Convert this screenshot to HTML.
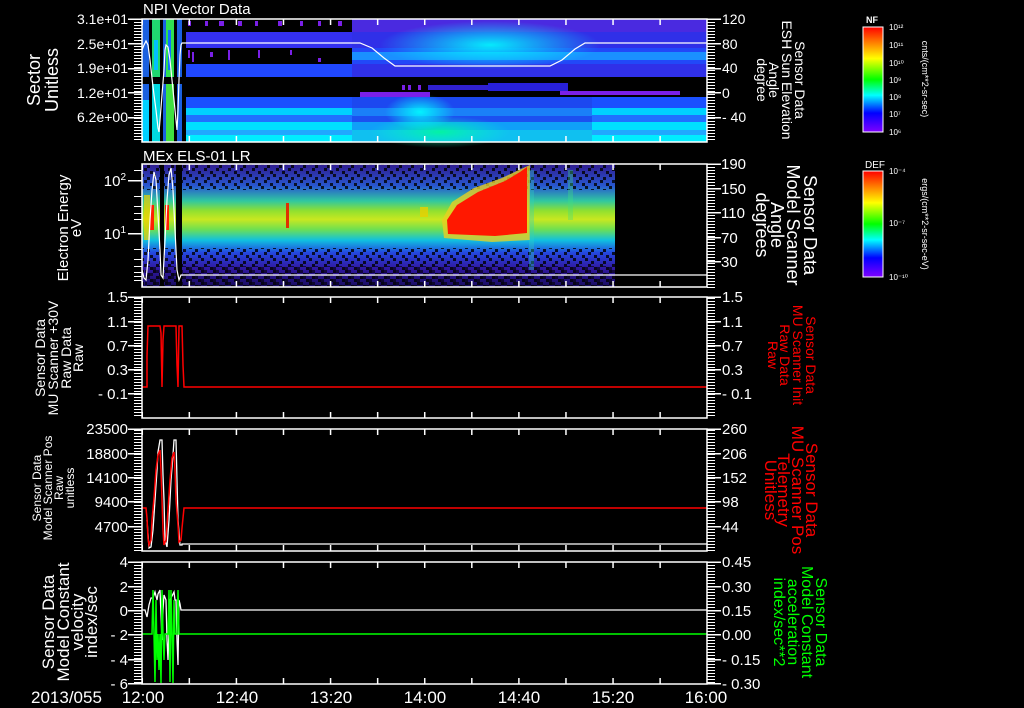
<!DOCTYPE html>
<html><head><meta charset="utf-8"><style>
html,body{margin:0;padding:0;background:#000;}
svg{display:block}
text{font-family:"Liberation Sans",sans-serif;fill:#fff;}
.red text{fill:#f00;}
.grn text{fill:#0f0;}
</style></head><body>
<svg width="1024" height="708" viewBox="0 0 1024 708" xmlns="http://www.w3.org/2000/svg">
<defs>
<pattern id="mt" width="8" height="3" patternUnits="userSpaceOnUse" y="19"><rect width="8" height="1" fill="#fff"/></pattern>
<pattern id="mtx" width="47.08" height="8" patternUnits="userSpaceOnUse" x="141.5"><rect width="1.5" height="8" fill="#fff"/></pattern>
<pattern id="spk" width="12" height="12" patternUnits="userSpaceOnUse"><rect x="0" y="0" width="3" height="3" fill="#000"/><rect x="6" y="3" width="3" height="3" fill="#000"/><rect x="3" y="9" width="3" height="3" fill="#000"/><rect x="9" y="6" width="3" height="3" fill="#000"/></pattern>
<linearGradient id="cb" x1="0" y1="0" x2="0" y2="1">
<stop offset="0" stop-color="#ff0000"/><stop offset=".15" stop-color="#ff8000"/><stop offset=".3" stop-color="#ffff00"/><stop offset=".5" stop-color="#00ff00"/><stop offset=".65" stop-color="#00ffff"/><stop offset=".82" stop-color="#0000ff"/><stop offset="1" stop-color="#8000ff"/></linearGradient>
<linearGradient id="p2" x1="0" y1="0" x2="0" y2="1">
<stop offset="0" stop-color="#301a90"/><stop offset=".18" stop-color="#2858d0"/><stop offset=".3" stop-color="#30c8a0"/><stop offset=".38" stop-color="#90e030"/><stop offset=".45" stop-color="#c8e820"/><stop offset=".53" stop-color="#70e050"/><stop offset=".62" stop-color="#10c0e0"/><stop offset=".72" stop-color="#2448e0"/><stop offset=".85" stop-color="#3018a0"/><stop offset="1" stop-color="#180c60"/></linearGradient>
<radialGradient id="cy" cx=".5" cy=".5" r=".5"><stop offset="0" stop-color="#00ffff" stop-opacity=".9"/><stop offset="1" stop-color="#00ffff" stop-opacity="0"/></radialGradient>
<radialGradient id="gr" cx=".5" cy=".5" r=".5"><stop offset="0" stop-color="#00ff90" stop-opacity=".8"/><stop offset="1" stop-color="#00ffd0" stop-opacity="0"/></radialGradient>
</defs>

<!-- ===== Panel 1 ===== -->
<text x="143" y="14" font-size="15">NPI Vector Data</text>
<g>
<rect x="186" y="32" width="521" height="16" fill="#3430f0"/>
<rect x="186" y="64" width="521" height="13" fill="#2048ff"/>
<rect x="186" y="97" width="521" height="11" fill="#1a50ff"/>
<rect x="186" y="108" width="521" height="7" fill="#00d0ff"/>
<rect x="186" y="115" width="521" height="7" fill="#2070ff"/>
<rect x="186" y="122" width="521" height="8" fill="#00e0ff"/>
<rect x="186" y="130" width="521" height="5" fill="#20a8ff"/>
<rect x="186" y="135" width="521" height="7" fill="#00ecff"/>
<!-- right part -->
<rect x="352" y="19" width="355" height="58" fill="#3030e8"/>
<rect x="352" y="19" width="355" height="13" fill="#4a2ae0"/>
<rect x="352" y="48" width="355" height="16" fill="#2248f8"/>
<rect x="352" y="52" width="355" height="8" fill="#1a90ff"/>
<ellipse cx="490" cy="45" rx="110" ry="24" fill="url(#cy)"/>
<rect x="352" y="97" width="240" height="11" fill="#1c48f0"/>
<rect x="352" y="108" width="240" height="8" fill="#1a80f8"/>
<rect x="352" y="116" width="240" height="6" fill="#1c50f0"/>
<rect x="352" y="122" width="240" height="8" fill="#10a0f8"/>
<rect x="352" y="130" width="240" height="12" fill="#10c0f0"/>
<ellipse cx="440" cy="132" rx="70" ry="16" fill="url(#gr)"/>
<ellipse cx="420" cy="112" rx="35" ry="18" fill="url(#cy)"/>
<!-- sparse purple -->
<g fill="#7a20e8">
<rect x="188" y="21" width="3" height="5"/><rect x="205" y="21" width="3" height="5"/><rect x="219" y="21" width="5" height="5"/><rect x="238" y="21" width="4" height="5"/><rect x="255" y="21" width="3" height="5"/><rect x="278" y="21" width="4" height="5"/><rect x="300" y="21" width="3" height="5"/><rect x="318" y="21" width="3" height="5"/><rect x="338" y="21" width="4" height="5"/>
<rect x="188" y="50" width="2" height="8"/><rect x="192" y="52" width="2" height="10"/><rect x="210" y="52" width="3" height="5"/><rect x="228" y="50" width="2" height="10"/><rect x="258" y="50" width="2" height="8"/><rect x="290" y="50" width="2" height="5"/><rect x="318" y="58" width="3" height="4"/>
<rect x="402" y="85" width="3" height="5"/><rect x="408" y="85" width="3" height="5"/><rect x="418" y="85" width="3" height="5"/><rect x="428" y="85" width="60" height="5" fill="#3020d0"/><rect x="488" y="83" width="80" height="8" fill="#2820d8"/><rect x="560" y="91" width="120" height="4"/><rect x="360" y="92" width="70" height="5"/>
</g>
<!-- early region -->
<rect x="142" y="19" width="40" height="123" fill="#1a60e0"/>
<rect x="149" y="19" width="3" height="123" fill="#000"/>
<rect x="152" y="19" width="8" height="58" fill="#20d870"/>
<rect x="154" y="40" width="4" height="30" fill="#00c0ff"/>
<rect x="160" y="19" width="3" height="123" fill="#000"/>
<rect x="166" y="19" width="8" height="58" fill="#30e050"/>
<rect x="168" y="30" width="3" height="40" fill="#1070ff"/>
<rect x="174" y="19" width="3" height="123" fill="#000"/>
<rect x="152" y="84" width="8" height="58" fill="#00d8e0"/>
<rect x="166" y="84" width="8" height="58" fill="#40e040"/>
<rect x="142" y="100" width="7" height="42" fill="#00d0ff"/>
<rect x="182" y="19" width="4" height="123" fill="#000"/>
<rect x="142" y="77" width="44" height="7" fill="#000"/>
<polyline fill="none" stroke="#fff" stroke-width="1.2" points="142,50 144,45 146,41 148,45 150,60 152,78 154,95 156,110 158,128 159,132 160,120 162,95 164,70 165,50 166,45 168,47 170,60 172,80 174,100 176,120 177,130 178,110 179,80 180,55 181,45 182,43 186,43 360,43 372,48 384,58 395,66 550,66 562,60 575,49 585,43 707,43"/>
</g>
<rect x="142" y="19" width="565" height="123" fill="none" stroke="#fff" stroke-width="1.5"/>
<rect x="142" y="19" width="565" height="6" fill="url(#mtx)"/>
<rect x="142" y="136" width="565" height="6" fill="url(#mtx)"/>
<rect x="134" y="19" width="8" height="123" fill="url(#mt)"/>
<rect x="707" y="19" width="8" height="123" fill="url(#mt)"/>
<g fill="#fff"><rect x="128" y="18.5" width="14" height="1.5"/><rect x="128" y="43" width="14" height="1.5"/><rect x="128" y="68" width="14" height="1.5"/><rect x="128" y="92" width="14" height="1.5"/><rect x="128" y="117" width="14" height="1.5"/>
<rect x="707" y="18.5" width="14" height="1.5"/><rect x="707" y="43" width="14" height="1.5"/><rect x="707" y="68" width="14" height="1.5"/><rect x="707" y="92" width="14" height="1.5"/><rect x="707" y="117" width="14" height="1.5"/></g>
<g font-size="14" text-anchor="end"><text x="128" y="24">3.1e+01</text><text x="128" y="49">2.5e+01</text><text x="128" y="73">1.9e+01</text><text x="128" y="98">1.2e+01</text><text x="128" y="122">6.2e+00</text></g>
<g font-size="14"><text x="722" y="24">120</text><text x="722" y="49">80</text><text x="722" y="73">40</text><text x="722" y="98">0</text><text x="722" y="122">- 40</text></g>
<g transform="translate(40,80) rotate(-90)" font-size="18" text-anchor="middle"><text y="0">Sector</text><text y="18">Unitless</text></g>
<g transform="translate(795,80) rotate(90)" font-size="14" text-anchor="middle"><text y="0">Sensor Data</text><text y="13">ESH Sun Elevation</text><text y="26">Angle</text><text y="38">degree</text></g>
<rect x="863" y="27" width="20" height="105" fill="url(#cb)" stroke="#fff" stroke-width="1"/>
<text x="866" y="23" font-size="9" font-weight="bold">NF</text>
<g font-size="8"><text x="889" y="30">10¹²</text><text x="889" y="48">10¹¹</text><text x="889" y="66">10¹⁰</text><text x="889" y="83">10⁹</text><text x="889" y="100">10⁸</text><text x="889" y="117">10⁷</text><text x="889" y="135">10⁶</text></g>
<text transform="translate(922,79) rotate(90)" font-size="9" text-anchor="middle">cnts/(cm**2-sr-sec)</text>

<!-- ===== Panel 2 ===== -->
<text x="143" y="161" font-size="15">MEx ELS-01 LR</text>
<rect x="142" y="164" width="473" height="123" fill="url(#p2)"/>
<rect x="142" y="164" width="473" height="26" fill="url(#spk)" opacity=".8"/>
<rect x="142" y="248" width="473" height="39" fill="url(#spk)" opacity=".8"/>
<rect x="142" y="266" width="473" height="21" fill="url(#spk)" opacity=".6" transform="translate(3,0)"/>
<polygon points="444,238 442,220 452,202 474,188 502,178 521,169 530,165 530,240 492,242" fill="#e8d020" opacity=".8"/>
<polygon points="448,234 447,220 457,205 478,192 505,181 520,172 527,167 527,233 495,236" fill="#ff1800"/>
<rect x="286" y="203" width="3" height="25" fill="#e03000"/>
<rect x="420" y="207" width="8" height="10" fill="#e8d000" opacity=".8"/>
<rect x="529" y="170" width="5" height="100" fill="#30d0c0" opacity=".35"/>
<rect x="568" y="170" width="5" height="50" fill="#40e080" opacity=".35"/>
<rect x="144" y="195" width="6" height="45" fill="#f0d000" opacity=".7"/>
<rect x="150" y="205" width="4" height="25" fill="#ff2000"/>
<rect x="165" y="205" width="4" height="25" fill="#ff2000"/>
<rect x="160" y="164" width="4" height="123" fill="#000"/>
<rect x="176" y="164" width="6" height="123" fill="#000"/>
<polyline fill="none" stroke="#fff" stroke-width="1.2" points="142,270 144,278 146,280 148,260 150,220 152,190 154,172 156,180 158,215 160,250 161,275 163,278 165,240 167,200 169,175 171,168 173,190 175,230 177,270 179,280 181,275 707,275"/>
<rect x="142" y="164" width="565" height="123" fill="none" stroke="#fff" stroke-width="1.5"/>
<rect x="142" y="164" width="565" height="6" fill="url(#mtx)"/>
<rect x="142" y="281" width="565" height="6" fill="url(#mtx)"/>
<rect x="707" y="164" width="8" height="123" fill="url(#mt)" transform="translate(0,1)"/>
<g fill="#fff"><rect x="707" y="163.5" width="14" height="1.5"/><rect x="707" y="188" width="14" height="1.5"/><rect x="707" y="212" width="14" height="1.5"/><rect x="707" y="237" width="14" height="1.5"/><rect x="707" y="261" width="14" height="1.5"/>
<rect x="128" y="180" width="14" height="1.5"/><rect x="128" y="233" width="14" height="1.5"/><rect x="134" y="196" width="8" height="1"/><rect x="134" y="206" width="8" height="1"/><rect x="134" y="213" width="8" height="1"/><rect x="134" y="219" width="8" height="1"/><rect x="134" y="249" width="8" height="1"/><rect x="134" y="259" width="8" height="1"/><rect x="134" y="266" width="8" height="1"/><rect x="134" y="272" width="8" height="1"/><rect x="134" y="276" width="8" height="1"/><rect x="134" y="280" width="8" height="1"/><rect x="134" y="170" width="8" height="1"/></g>
<g font-size="15" text-anchor="end"><text x="126" y="186">10<tspan font-size="10" dy="-6">2</tspan></text><text x="126" y="239">10<tspan font-size="10" dy="-6">1</tspan></text></g>
<g font-size="15"><text x="721" y="169">190</text><text x="721" y="194">150</text><text x="721" y="218">110</text><text x="721" y="243">70</text><text x="721" y="267">30</text></g>
<g transform="translate(68,228) rotate(-90)" font-size="15" text-anchor="middle"><text y="0">Electron Energy</text><text y="13">eV</text></g>
<g transform="translate(804,225) rotate(90)" font-size="18" text-anchor="middle"><text y="0">Sensor Data</text><text y="17">Model Scanner</text><text y="33">Angle</text><text y="48">degrees</text></g>
<rect x="863" y="171" width="20" height="106" fill="url(#cb)" stroke="#fff" stroke-width="1"/>
<text x="865" y="168" font-size="10">DEF</text>
<g font-size="8"><text x="889" y="174">10⁻⁴</text><text x="889" y="226">10⁻⁷</text><text x="889" y="280">10⁻¹⁰</text></g>
<text transform="translate(922,224) rotate(90)" font-size="9" text-anchor="middle">ergs/(cm**2-sr-sec-eV)</text>

<!-- ===== Panel 3 ===== -->
<polyline fill="none" stroke="#f00" stroke-width="1.5" points="142,387 147,387 147,356 148,326 160,326 161,333 162,387 163,340 164,326 176,326 177,365 178,387 179,326 182,326 183,365 184,387 707,387"/>
<rect x="142" y="297" width="565" height="121" fill="none" stroke="#fff" stroke-width="1.5"/>
<rect x="142" y="297" width="565" height="6" fill="url(#mtx)"/>
<rect x="142" y="412" width="565" height="6" fill="url(#mtx)"/>
<rect x="134" y="297" width="8" height="121" fill="url(#mt)"/>
<rect x="707" y="297" width="8" height="121" fill="url(#mt)"/>
<g fill="#fff"><rect x="128" y="296.5" width="14" height="1.5"/><rect x="128" y="321" width="14" height="1.5"/><rect x="128" y="345" width="14" height="1.5"/><rect x="128" y="369" width="14" height="1.5"/><rect x="128" y="393" width="14" height="1.5"/>
<rect x="707" y="296.5" width="14" height="1.5"/><rect x="707" y="321" width="14" height="1.5"/><rect x="707" y="345" width="14" height="1.5"/><rect x="707" y="369" width="14" height="1.5"/><rect x="707" y="393" width="14" height="1.5"/></g>
<g font-size="15" text-anchor="end"><text x="128" y="302">1.5</text><text x="128" y="327">1.1</text><text x="128" y="351">0.7</text><text x="128" y="375">0.3</text><text x="128" y="399">- 0.1</text></g>
<g font-size="15"><text x="722" y="302">1.5</text><text x="722" y="327">1.1</text><text x="722" y="351">0.7</text><text x="722" y="375">0.3</text><text x="722" y="399">- 0.1</text></g>
<g transform="translate(45,358) rotate(-90)" font-size="14" text-anchor="middle"><text y="0">Sensor Data</text><text y="13">MU Scanner +30V</text><text y="26">Raw Data</text><text y="38">Raw</text></g>
<g class="red" transform="translate(806,355) rotate(90)" font-size="14" text-anchor="middle"><text y="0">Sensor Data</text><text y="13">MU Scanner Init</text><text y="26">Raw Data</text><text y="38">Raw</text></g>

<!-- ===== Panel 4 ===== -->
<polyline fill="none" stroke="#fff" stroke-width="1.3" points="147,520 149,548 151,547 153,530 155,500 157,470 158,452 160,440 162,440 163,475 164,500 165,540 167,547 169,520 171,480 173,455 174,440 176,440 177,480 178,520 180,545 182,545 182,544 707,544"/>
<polyline fill="none" stroke="#f00" stroke-width="1.5" points="142,508 146,508 147,518 148,538 149,545 151,540 152,520 154,498 156,470 158,455 160,450 161,470 162,500 163,530 164,545 166,540 168,510 170,480 172,458 174,452 175,470 176,500 178,525 179,542 181,540 182,528 184,508 707,508"/>
<rect x="142" y="429" width="565" height="122" fill="none" stroke="#fff" stroke-width="1.5"/>
<rect x="142" y="429" width="565" height="6" fill="url(#mtx)"/>
<rect x="142" y="545" width="565" height="6" fill="url(#mtx)"/>
<rect x="134" y="430" width="8" height="121" fill="url(#mt)"/>
<rect x="707" y="430" width="8" height="121" fill="url(#mt)"/>
<g fill="#fff"><rect x="128" y="428.5" width="14" height="1.5"/><rect x="128" y="453" width="14" height="1.5"/><rect x="128" y="477" width="14" height="1.5"/><rect x="128" y="501" width="14" height="1.5"/><rect x="128" y="526" width="14" height="1.5"/>
<rect x="707" y="428.5" width="14" height="1.5"/><rect x="707" y="453" width="14" height="1.5"/><rect x="707" y="477" width="14" height="1.5"/><rect x="707" y="501" width="14" height="1.5"/><rect x="707" y="526" width="14" height="1.5"/></g>
<g font-size="15" text-anchor="end"><text x="128" y="434">23500</text><text x="128" y="459">18800</text><text x="128" y="483">14100</text><text x="128" y="507">9400</text><text x="128" y="532">4700</text></g>
<g font-size="15"><text x="722" y="434">260</text><text x="722" y="459">206</text><text x="722" y="483">152</text><text x="722" y="507">98</text><text x="722" y="532">44</text></g>
<g transform="translate(41,488) rotate(-90)" font-size="12" text-anchor="middle"><text y="0">Sensor Data</text><text y="11">Model Scanner Pos</text><text y="22">Raw</text><text y="33">unitless</text></g>
<g class="red" transform="translate(806,490) rotate(90)" font-size="17" text-anchor="middle"><text y="0">Sensor Data</text><text y="14">MU Scanner Pos</text><text y="28">Telemetry</text><text y="41">Unitless</text></g>

<!-- ===== Panel 5 ===== -->
<polyline fill="none" stroke="#fff" stroke-width="1.3" points="142,610 145,610 147,617 149,605 151,598 153,598 155,592 157,600 158,594 160,590 162,640 163,610 164,595 166,600 167,640 168,660 170,600 172,596 174,592 175,600 176,600 177,640 178,665 179,600 180,604 181,610 707,610"/>
<polyline fill="none" stroke="#0f0" stroke-width="1.5" points="142,634 152,634 153,590 154,634 155,682 156,600 157,660 158,634 159,670 160,634 161,683 162,590 163,634 164,660 165,634 168,634 169,590 170,682 171,590 172,634 173,683 174,600 175,634 177,634 178,590 179,634 707,634"/>
<rect x="142" y="562" width="565" height="122" fill="none" stroke="#fff" stroke-width="1.5"/>
<rect x="142" y="562" width="565" height="6" fill="url(#mtx)"/>
<rect x="142" y="678" width="565" height="6" fill="url(#mtx)"/>
<rect x="134" y="562" width="8" height="122" fill="url(#mt)"/>
<rect x="707" y="562" width="8" height="122" fill="url(#mt)"/>
<g fill="#fff"><rect x="128" y="561.5" width="14" height="1.5"/><rect x="128" y="586" width="14" height="1.5"/><rect x="128" y="610" width="14" height="1.5"/><rect x="128" y="634" width="14" height="1.5"/><rect x="128" y="659" width="14" height="1.5"/><rect x="128" y="683" width="14" height="1.5"/>
<rect x="707" y="561.5" width="14" height="1.5"/><rect x="707" y="586" width="14" height="1.5"/><rect x="707" y="610" width="14" height="1.5"/><rect x="707" y="634" width="14" height="1.5"/><rect x="707" y="659" width="14" height="1.5"/><rect x="707" y="683" width="14" height="1.5"/></g>
<g font-size="15" text-anchor="end"><text x="128" y="567">4</text><text x="128" y="592">2</text><text x="128" y="616">0</text><text x="128" y="640">- 2</text><text x="128" y="665">- 4</text><text x="128" y="689">- 6</text></g>
<g font-size="15"><text x="722" y="567">0.45</text><text x="722" y="592">0.30</text><text x="722" y="616">0.15</text><text x="722" y="640">0.00</text><text x="722" y="665">- 0.15</text><text x="722" y="689">- 0.30</text></g>
<g transform="translate(54,622) rotate(-90)" font-size="17" text-anchor="middle"><text y="0">Sensor Data</text><text y="15">Model Constant</text><text y="29">velocity</text><text y="43">index/sec</text></g>
<g class="grn" transform="translate(816,622) rotate(90)" font-size="16" text-anchor="middle"><text y="0">Sensor Data</text><text y="14">Model Constant</text><text y="28">acceleration</text><text y="42">index/sec**2</text></g>

<g font-size="17"><text x="31" y="703">2013/055</text></g>
<g font-size="17" text-anchor="middle"><text x="143" y="703">12:00</text><text x="237" y="703">12:40</text><text x="331" y="703">13:20</text><text x="425" y="703">14:00</text><text x="519" y="703">14:40</text><text x="613" y="703">15:20</text><text x="706" y="703">16:00</text></g>
</svg>
</body></html>
